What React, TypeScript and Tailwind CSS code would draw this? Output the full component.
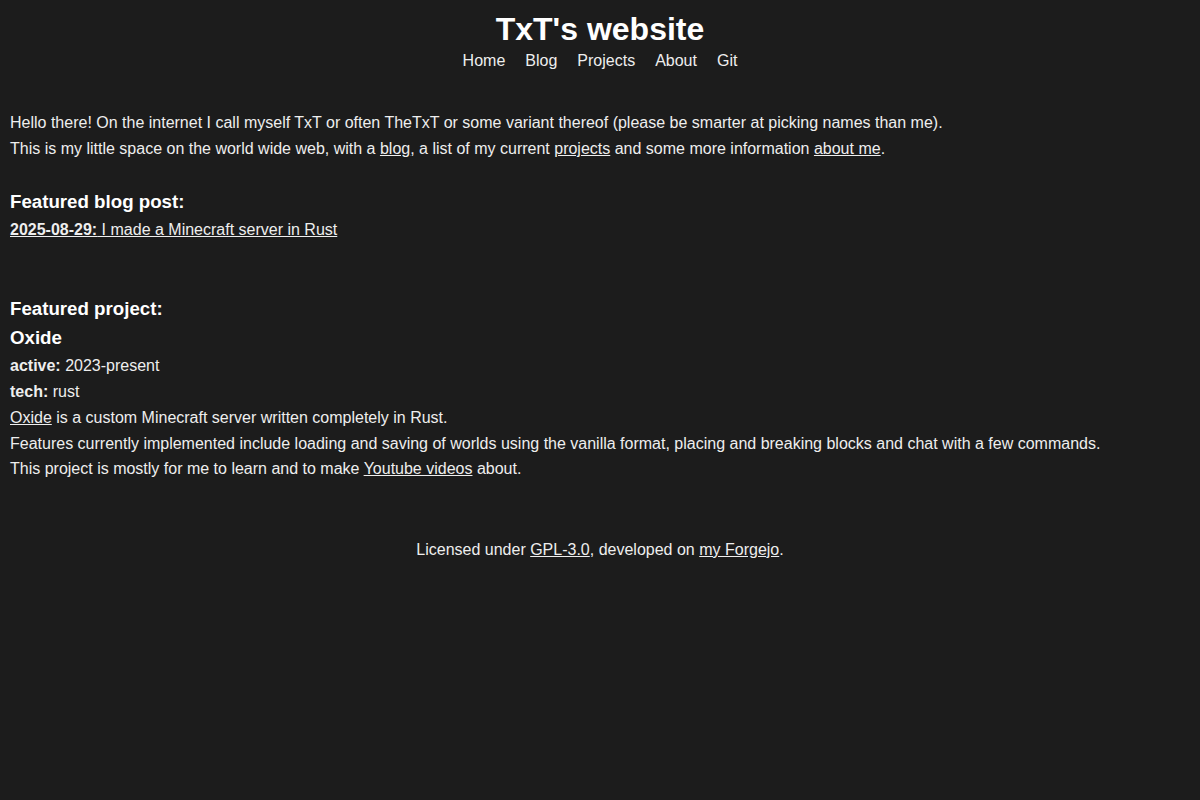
export default function App() {
  return (
    <div
      className="min-h-[800px] bg-[#1c1c1c] text-[#eeeeee] text-[16px] leading-[26px]"
      style={{ fontFamily: '"Liberation Sans", Arial, sans-serif' }}
    >
      <header className="flex flex-col items-center pt-[10px]">
        <h1 className="text-[32px] leading-[38px] font-bold text-white">TxT's website</h1>
        <nav className="flex gap-5">
          <a href="#">Home</a>
          <a href="#">Blog</a>
          <a href="#">Projects</a>
          <a href="#">About</a>
          <a href="#">Git</a>
        </nav>
      </header>

      <main className="px-[10px] pt-[36px]">
        <p>
          Hello there! On the internet I call myself TxT or often TheTxT or some variant thereof (please be smarter at
          picking names than me).
          <br />
          This is my little space on the world wide web, with a <a className="underline" href="#">blog</a>, a list of my
          current <a className="underline" href="#">projects</a> and some more information{' '}
          <a className="underline" href="#">about me</a>.
        </p>

        <h3 className="mt-[25px] text-[18.7px] leading-[30px] font-bold text-white">Featured blog post:</h3>
        <a className="block underline" href="#">
          <b>2025-08-29:</b> I made a Minecraft server in Rust
        </a>

        <h3 className="mt-[51px] text-[18.7px] leading-[29px] font-bold text-white">Featured project:</h3>
        <h3 className="text-[18.7px] leading-[29px] font-bold text-white">Oxide</h3>
        <p className="mt-[1px]">
          <b>active:</b> 2023-present
        </p>
        <p>
          <b>tech:</b> rust
        </p>
        <p className="leading-[25.5px]">
          <a className="underline" href="#">Oxide</a> is a custom Minecraft server written completely in Rust.
          <br />
          Features currently implemented include loading and saving of worlds using the vanilla format, placing and
          breaking blocks and chat with a few commands.
          <br />
          This project is mostly for me to learn and to make <a className="underline" href="#">Youtube videos</a> about.
        </p>
      </main>

      <footer className="pt-[55px] text-center">
        Licensed under <a className="underline" href="#">GPL-3.0</a>, developed on{' '}
        <a className="underline" href="#">my Forgejo</a>.
      </footer>
    </div>
  )
}
